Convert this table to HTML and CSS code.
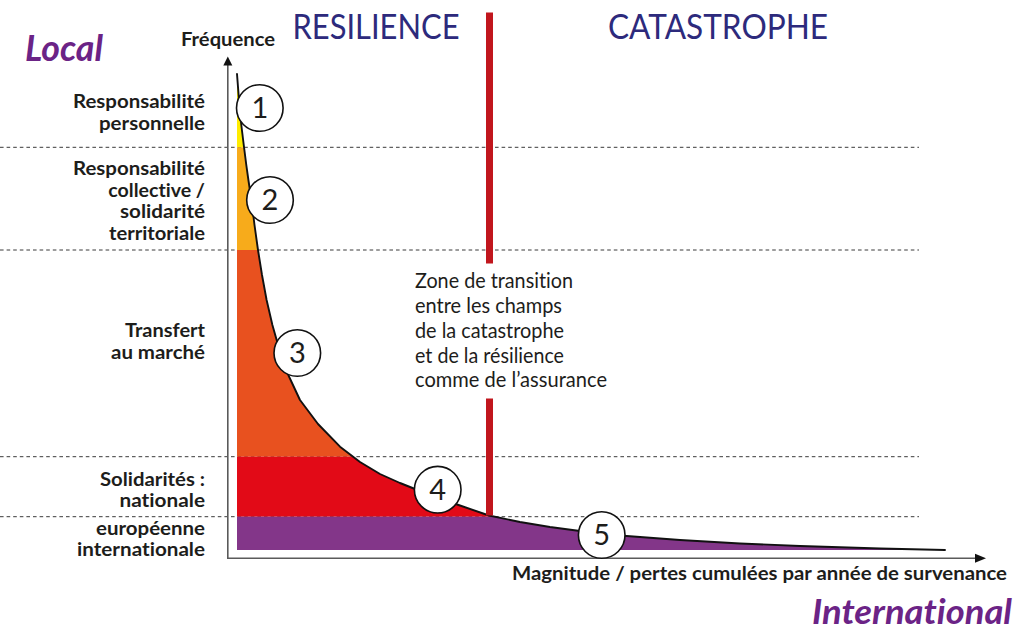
FILE: index.html
```
<!DOCTYPE html>
<html lang="fr">
<head>
<meta charset="utf-8">
<title>Résilience et catastrophe</title>
<link rel="stylesheet" href="styles.css">
</head>
<body>
<svg class="chart" width="1024" height="631" viewBox="0 0 1024 631" xmlns="http://www.w3.org/2000/svg">
  <defs>
    <clipPath id="area">
      <path d="M237,74 L239,100 L241.3,125 L244,147 L246.3,165 L248.4,180 L251.4,200 L254.5,225 L258,250 L262,275 L266.6,300 L272.4,325 L279.5,350 L288.3,375 L300,400 L318,424 L340,446.7 L360,462 L380,474 L400,483 L420,491 L440,498.5 L460,505.5 L489,515.5 L520,522 L550,527 L580,531 L620,535.5 L680,540 L740,543.5 L800,546 L880,548.5 L945,550 L237,550 Z"/>
    </clipPath>
  </defs>

  <!-- dashed band separators -->
  <g class="dash">
    <line x1="0" y1="147.3" x2="919" y2="147.3"/>
    <line x1="0" y1="250" x2="919" y2="250"/>
    <line x1="0" y1="456.7" x2="919" y2="456.7"/>
    <line x1="0" y1="516.7" x2="919" y2="516.7"/>
  </g>

  <!-- coloured bands under the curve -->
  <g clip-path="url(#area)">
    <rect class="band-yellow" x="230" y="60" width="720" height="87.3"/>
    <rect class="band-amber" x="230" y="147.3" width="720" height="102.7"/>
    <rect class="band-orange" x="230" y="250" width="720" height="206.7"/>
    <rect class="band-red" x="230" y="456.7" width="720" height="60"/>
    <rect class="band-purple" x="230" y="516.7" width="720" height="34"/>
  </g>

  <!-- curve -->
  <polyline class="curve" points="237,74 239,100 241.3,125 244,147 246.3,165 248.4,180 251.4,200 254.5,225 258,250 262,275 266.6,300 272.4,325 279.5,350 288.3,375 300,400 318,424 340,446.7 360,462 380,474 400,483 420,491 440,498.5 460,505.5 489,515.5 520,522 550,527 580,531 620,535.5 680,540 740,543.5 800,546 880,548.5 945,550"/>

  <!-- axes -->
  <line class="axis" x1="227.8" y1="64" x2="227.8" y2="558.3"/>
  <line class="axis" x1="227" y1="558.3" x2="977" y2="558.3"/>
  <polygon class="arrow" points="227.8,56.5 223.3,65.5 232.3,65.5"/>
  <polygon class="arrow" points="986,558.3 975,553.8 975,562.8"/>

  <!-- transition line -->
  <rect class="redline" x="486" y="12.5" width="7" height="251"/>
  <rect class="redline" x="486" y="398.5" width="7" height="117"/>

  <!-- titles -->
  <text class="t-title" x="292.5" y="39.3" textLength="167" lengthAdjust="spacingAndGlyphs">RESILIENCE</text>
  <text class="t-title" x="608" y="39.3" textLength="220" lengthAdjust="spacingAndGlyphs">CATASTROPHE</text>

  <text class="t-scale" x="25" y="61" textLength="78" lengthAdjust="spacingAndGlyphs">Local</text>
  <text class="t-scale t-scale-small" x="812" y="624" textLength="200" lengthAdjust="spacingAndGlyphs">International</text>

  <text class="t-axis" x="181" y="46" textLength="94" lengthAdjust="spacingAndGlyphs">Fréquence</text>
  <text class="t-axis" x="512" y="580" textLength="495" lengthAdjust="spacingAndGlyphs">Magnitude / pertes cumulées par année de survenance</text>

  <!-- left labels -->
  <g class="t-label">
    <text x="205" y="108.3" textLength="132" lengthAdjust="spacingAndGlyphs">Responsabilité</text>
    <text x="205" y="129.5" textLength="106" lengthAdjust="spacingAndGlyphs">personnelle</text>

    <text x="205" y="175.3" textLength="132" lengthAdjust="spacingAndGlyphs">Responsabilité</text>
    <text x="205" y="196.7" textLength="96.7" lengthAdjust="spacingAndGlyphs">collective /</text>
    <text x="205" y="218.2" textLength="85" lengthAdjust="spacingAndGlyphs">solidarité</text>
    <text x="205" y="239.5" textLength="96" lengthAdjust="spacingAndGlyphs">territoriale</text>

    <text x="205" y="337.3" textLength="80" lengthAdjust="spacingAndGlyphs">Transfert</text>
    <text x="205" y="358.5" textLength="94" lengthAdjust="spacingAndGlyphs">au marché</text>

    <text x="205" y="486" textLength="105" lengthAdjust="spacingAndGlyphs">Solidarités :</text>
    <text x="205" y="507.3" textLength="85.5" lengthAdjust="spacingAndGlyphs">nationale</text>

    <text x="205" y="535.3" textLength="109" lengthAdjust="spacingAndGlyphs">européenne</text>
    <text x="205" y="556.3" textLength="128" lengthAdjust="spacingAndGlyphs">internationale</text>
  </g>

  <!-- transition note -->
  <g class="t-note">
    <text x="415" y="288.3" textLength="158" lengthAdjust="spacingAndGlyphs">Zone de transition</text>
    <text x="415" y="312.9" textLength="147" lengthAdjust="spacingAndGlyphs">entre les champs</text>
    <text x="415" y="337.7" textLength="149" lengthAdjust="spacingAndGlyphs">de la catastrophe</text>
    <text x="415" y="362.6" textLength="149" lengthAdjust="spacingAndGlyphs">et de la résilience</text>
    <text x="415" y="387.3" textLength="192" lengthAdjust="spacingAndGlyphs">comme de l’assurance</text>
  </g>

  <!-- numbered markers -->
  <g class="marker">
    <circle cx="259.8" cy="108" r="23.3"/>
    <text x="259.8" y="118">1</text>
  </g>
  <g class="marker">
    <circle cx="270" cy="200" r="23.3"/>
    <text x="270" y="210">2</text>
  </g>
  <g class="marker">
    <circle cx="297.3" cy="353" r="23.3"/>
    <text x="297.3" y="363">3</text>
  </g>
  <g class="marker">
    <circle cx="437.7" cy="489.7" r="23.3"/>
    <text x="437.7" y="499.7">4</text>
  </g>
  <g class="marker">
    <circle cx="601.7" cy="535" r="23.3"/>
    <text x="601.7" y="545">5</text>
  </g>
</svg>
</body>
</html>
```

FILE: styles.css
```
html, body {
  margin: 0;
  padding: 0;
  background: #ffffff;
}

.chart {
  display: block;
  font-family: Lato, "Liberation Sans", Arial, sans-serif;
  font-variant-ligatures: none;
  font-feature-settings: "liga" 0, "clig" 0;
}

.dash line {
  stroke: #3a3a3a;
  stroke-width: 1;
  stroke-dasharray: 3.6 3;
}

.band-yellow { fill: #ffec00; }
.band-amber { fill: #f7ab1b; }
.band-orange { fill: #e8511f; }
.band-red { fill: #e20a17; }
.band-purple { fill: #833689; }

.curve {
  fill: none;
  stroke: #111111;
  stroke-width: 1.9;
  stroke-linejoin: round;
  stroke-linecap: round;
}

.axis {
  stroke: #5a5a5a;
  stroke-width: 1.6;
}

.arrow {
  fill: #111111;
}

.redline {
  fill: #c1161d;
}

.t-title {
  font-size: 35px;
  font-weight: 400;
  fill: #2d2a7c;
}

.t-scale {
  font-size: 36px;
  font-style: italic;
  font-weight: 700;
  fill: #6b2386;
}

.t-scale-small {
  font-size: 34px;
}

.t-axis {
  font-size: 18px;
  font-weight: 700;
  fill: #1d1d1b;
}

.t-label {
  font-size: 18.5px;
  font-weight: 700;
  fill: #1d1d1b;
  text-anchor: end;
}

.t-note {
  font-size: 20.5px;
  font-weight: 400;
  fill: #1d1d1b;
}

.marker circle {
  fill: #ffffff;
  stroke: #111111;
  stroke-width: 1.6;
}

.marker text {
  font-size: 29px;
  font-weight: 400;
  fill: #1d1d1b;
  text-anchor: middle;
}
```
